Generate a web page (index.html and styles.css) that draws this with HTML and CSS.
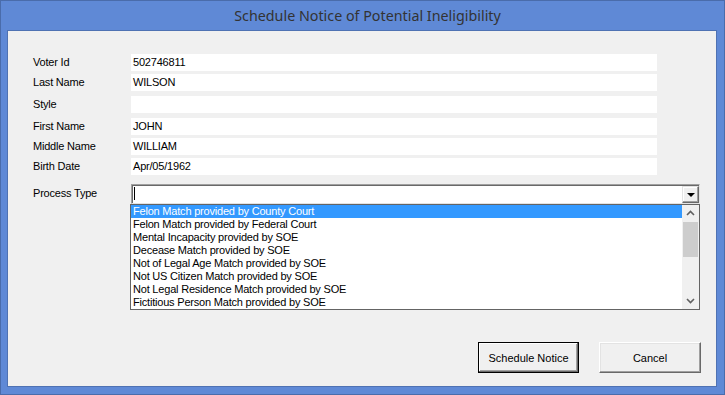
FILE: index.html
```html
<!DOCTYPE html>
<html>
<head>
<meta charset="utf-8">
<link rel="stylesheet" href="styles.css">
</head>
<body>
<div class="window">
  <div class="titlebar">Schedule Notice of Potential Ineligibility</div>
  <div class="panel">
    <div class="form">
      <div class="row"><span class="label">Voter Id</span><span class="field">502746811</span></div>
      <div class="row gap3"><span class="label">Last Name</span><span class="field">WILSON</span></div>
      <div class="row gap5"><span class="label">Style</span><span class="field"></span></div>
      <div class="row gap5"><span class="label">First Name</span><span class="field">JOHN</span></div>
      <div class="row gap3"><span class="label">Middle Name</span><span class="field">WILLIAM</span></div>
      <div class="row gap3"><span class="label">Birth Date</span><span class="field">Apr/05/1962</span></div>
      <div class="row combo-row">
        <span class="label combo-label">Process Type</span>
        <div class="combo-wrap">
          <div class="combo">
            <span class="caret"></span>
            <span class="drop-btn"><span class="tri"></span></span>
          </div>
          <div class="list">
            <div class="items">
              <div class="item selected">Felon Match provided by County Court</div>
              <div class="item">Felon Match provided by Federal Court</div>
              <div class="item">Mental Incapacity provided by SOE</div>
              <div class="item">Decease Match provided by SOE</div>
              <div class="item">Not of Legal Age Match provided by SOE</div>
              <div class="item">Not US Citizen Match provided by SOE</div>
              <div class="item">Not Legal Residence Match provided by SOE</div>
              <div class="item">Fictitious Person Match provided by SOE</div>
            </div>
            <div class="scrollbar">
              <svg class="chev" width="17" height="17" viewBox="0 0 17 17"><polyline points="5,10 8.5,6.5 12,10" fill="none" stroke="#606060" stroke-width="1.6"/></svg>
              <div class="thumb"></div>
              <div class="track"></div>
              <svg class="chev" width="17" height="17" viewBox="0 0 17 17"><polyline points="5,7 8.5,10.5 12,7" fill="none" stroke="#606060" stroke-width="1.6"/></svg>
            </div>
          </div>
        </div>
      </div>
    </div>
    <div class="buttons">
      <button class="btn default">Schedule Notice</button>
      <button class="btn">Cancel</button>
    </div>
  </div>
</div>
</body>
</html>
```

FILE: styles.css
```css
html, body {
  margin: 0;
  padding: 0;
  background: #ffffff;
}

.window {
  box-sizing: border-box;
  width: 725px;
  height: 395px;
  background: #5f89d6;
  border: 1px solid #4a6cab;
  padding: 0 7px 7px 6px;
  display: flex;
  flex-direction: column;
}

.titlebar {
  height: 29px;
  line-height: 29px;
  text-align: center;
  padding-left: 11px;
  font-family: "Noto Sans", "Open Sans", sans-serif;
  font-size: 14.3px;
  color: #333333;
}

.panel {
  flex: 1;
  background: #f0f0f0;
  border: 1px solid #4f72b3;
  display: flex;
  flex-direction: column;
  font-family: "Liberation Sans", Arial, sans-serif;
  font-size: 11px;
  letter-spacing: -0.2px;
  color: #000;
}

.form {
  padding: 23px 0 0 25px;
  display: flex;
  flex-direction: column;
}

.row {
  display: flex;
  align-items: center;
  height: 17px;
}

.gap3 { margin-top: 3px; }
.gap5 { margin-top: 5px; }

.label {
  width: 98px;
  flex: none;
  position: relative;
  top: -1px;
}

.field {
  width: 524px;
  height: 17px;
  line-height: 16px;
  padding-left: 2px;
  background: #ffffff;
}

.combo-row {
  margin-top: 9px;
  height: 20px;
  align-items: flex-start;
}

.combo-label {
  top: 3px;
}

.combo-wrap {
  position: relative;
  width: 569px;
  height: 20px;
}

.combo {
  box-sizing: border-box;
  width: 569px;
  height: 20px;
  background: #ffffff;
  border: 1px solid;
  border-color: #a0a0a0 #e3e3e3 #e3e3e3 #a0a0a0;
  box-shadow: inset 1px 1px 0 #696969;
  display: flex;
  justify-content: space-between;
  align-items: flex-start;
}

.caret {
  width: 1px;
  height: 13px;
  background: #000;
  margin: 2px 0 0 2px;
}

.drop-btn {
  box-sizing: border-box;
  width: 17px;
  height: 17px;
  margin-top: 1px;
  background: #f0f0f0;
  border: 1px solid;
  border-color: #e3e3e3 #696969 #696969 #e3e3e3;
  box-shadow: inset -1px -1px 0 #a0a0a0, inset 1px 1px 0 #ffffff;
  display: flex;
  align-items: center;
  justify-content: center;
}

.tri {
  width: 0;
  height: 0;
  border-left: 4px solid transparent;
  border-right: 4px solid transparent;
  border-top: 4px solid #000;
  margin-top: 1px;
}

.list {
  position: absolute;
  left: -1px;
  top: 20px;
  width: 570px;
  height: 106px;
  box-sizing: border-box;
  background: #ffffff;
  border: 1px solid #646464;
  display: flex;
  z-index: 2;
}

.items {
  flex: 1;
  display: flex;
  flex-direction: column;
}

.item {
  height: 13px;
  line-height: 13px;
  padding-left: 2px;
  white-space: nowrap;
}

.item.selected {
  background: #3399ff;
  color: #ffffff;
}

.scrollbar {
  width: 17px;
  background: #f0f0f0;
  display: flex;
  flex-direction: column;
}

.chev {
  display: block;
  flex: none;
}

.thumb {
  height: 35px;
  margin: 0 1px 0 1px;
  background: #cdcdcd;
}

.track {
  flex: 1;
}

.buttons {
  margin-top: auto;
  display: flex;
  justify-content: flex-end;
  gap: 20px;
  padding: 0 15px 13px 0;
}

.btn {
  box-sizing: border-box;
  height: 31px;
  width: 102px;
  background: #f0f0f0;
  border: 1px solid;
  border-color: #ffffff #696969 #696969 #ffffff;
  box-shadow: inset -1px -1px 0 #a0a0a0, inset 1px 1px 0 #e3e3e3;
  font-family: "Liberation Sans", Arial, sans-serif;
  font-size: 11px;
  color: #000;
  padding: 0;
}

.btn.default {
  width: 101px;
  border: 1px solid #000000;
  box-shadow: inset -1px -1px 0 #696969, inset 1px 1px 0 #ffffff, inset -2px -2px 0 #a0a0a0;
}
```
